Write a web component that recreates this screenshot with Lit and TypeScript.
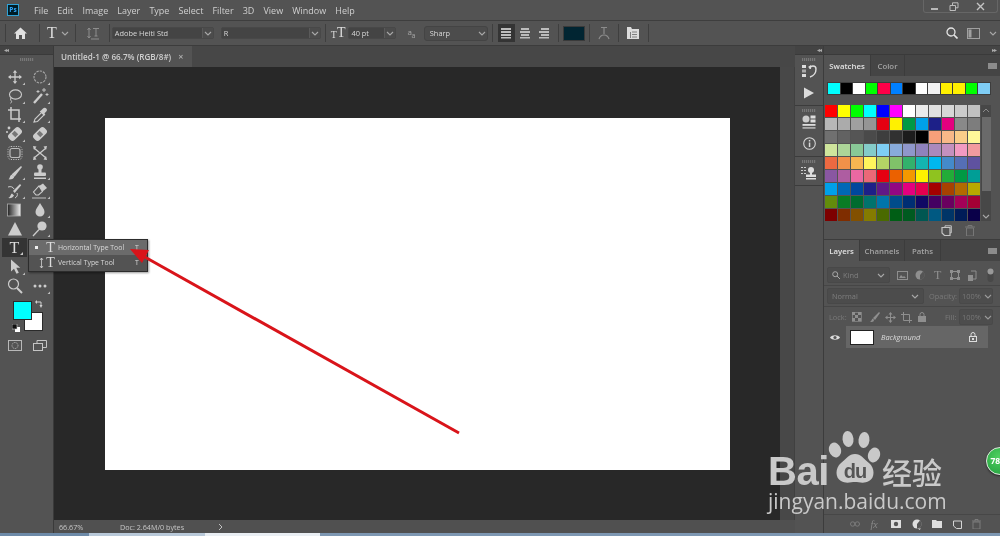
import { LitElement, html, css, svg } from "lit";
import { customElement } from "lit/decorators.js";

const MENUS = ["File", "Edit", "Image", "Layer", "Type", "Select", "Filter", "3D", "View", "Window", "Help"];

const RECENT = ["#00ffff", "#000000", "#ffffff", "#00ff00", "#ff0048", "#0080ff", "#000000", "#ffffff", "#f2f2f2", "#fff000", "#fff000", "#00ff00", "#7fcdf5"];

const SWATCHES = [
  "#ff0000", "#ffff00", "#00ff00", "#00ffff", "#0000ff", "#ff00ff", "#ffffff", "#ebebeb", "#e1e1e1", "#d7d7d7", "#cbcbcb", "#c1c1c1",
  "#b7b7b7", "#ababab", "#a0a0a0", "#959595", "#e60012", "#fff100", "#009944", "#00a0e9", "#1d2088", "#e4007f", "#898989", "#7d7d7d",
  "#707070", "#626262", "#555555", "#4a4a4a", "#3e3e3e", "#313131", "#1c1c1c", "#000000", "#f7a07a", "#f8b888", "#facd89", "#fff899",
  "#cfe59c", "#acd598", "#89c997", "#84ccc9", "#7ecef4", "#88abda", "#8f97cb", "#8f82bc", "#aa89bd", "#c490bf", "#f29ac2", "#f29b9f",
  "#ec6941", "#f19149", "#f8b551", "#fff45c", "#b3d465", "#80c269", "#32b16c", "#13b5b1", "#00b7ee", "#448aca", "#556fb5", "#5f52a0",
  "#8957a1", "#ae5da1", "#ea68a2", "#eb6877", "#e60012", "#eb6100", "#f39800", "#fff100", "#8fc31f", "#22ac38", "#009944", "#009e96",
  "#00a0e9", "#0068b7", "#00479d", "#1d2088", "#601986", "#920783", "#e4007f", "#e5004f", "#a40000", "#a84200", "#b36b00", "#b8a800",
  "#638c0b", "#097c25", "#006b2f", "#00736d", "#0075a9", "#004c8b", "#002e73", "#100964", "#440062", "#6a005f", "#a40058", "#a40035",
  "#7d0000", "#7f2d00", "#825000", "#847b00", "#4a6a00", "#005e15", "#005a20", "#005752", "#005982", "#003567", "#001c58", "#0a0049",
];

const C = "#cccccc";

// tool icons, drawn in a 24x18 box with the glyph around 12,9
const TOOL_ICONS: Record<string, unknown> = {
  move: svg`<path d="M12 3v12M6 9h12" stroke=${C} stroke-width="1.300" fill="none"/><path d="M12 2l2.200 2.800h-4.400zM12 16l2.200-2.800h-4.400zM5 9l2.800-2.200v4.400zM19 9l-2.800-2.200v4.400z" fill=${C}/>`,
  marquee: svg`<circle cx="12" cy="9" r="6" stroke="#a8a8a8" stroke-width="1.100" stroke-dasharray="2.400 1" fill="none"/>`,
  lasso: svg`<ellipse cx="12.500" cy="7.500" rx="6" ry="4.600" stroke=${C} stroke-width="1.100" fill="none"/><path d="M8 11c-1 1.500 0 2.500 .5 3.200c.3 .8-.3 1.600-1 2" stroke=${C} stroke-width="1" fill="none"/>`,
  wand: svg`<path d="M6 16L14 7" stroke=${C} stroke-width="2.400"/><path d="M16 1v4M14 3h4M19 6v3M17.500 7.500h3M10 3v3M8.500 4.500h3" stroke=${C} stroke-width=".9"/>`,
  crop: svg`<path d="M8 1v12h10M5 4h11v12" stroke=${C} stroke-width="1.500" fill="none"/>`,
  dropper: svg`<path d="M6 16l1-3 7-7 2.500 2.500-7 7z" fill="none" stroke=${C} stroke-width="1.100"/><path d="M13 4.500l2-2c1-1 2.500-1 3.300 0c.9 .9 .9 2.200 0 3l-2 2 1 1-1.300 1.300-4.300-4.300z" fill=${C}/>`,
  bandA: svg`<g transform="rotate(-45 12 9)"><rect x="4.500" y="5" width="15" height="8" rx="3" fill=${C}/><rect x="10" y="6.500" width="4" height="5" fill="#777"/></g><circle cx="6" cy="3" r="1.400" fill=${C}/><circle cx="4" cy="7" r="1" fill=${C}/>`,
  bandB: svg`<g transform="rotate(-45 12 9)"><rect x="4.500" y="5" width="15" height="8" rx="3" fill=${C}/><rect x="10" y="6.500" width="4" height="5" fill="#777"/></g>`,
  subject: svg`<rect x="7" y="4.500" width="10" height="9" rx="2" fill="none" stroke="#bbb" stroke-width="1.200"/><rect x="5" y="2.500" width="14" height="13" rx="3" fill="none" stroke="#bbb" stroke-width="1" stroke-dasharray="1.200 1.200"/>`,
  shuffle: svg`<path d="M6 4l12 10M6 14L18 4" stroke=${C} stroke-width="1.300"/><path d="M5 2l3.500 .5L6 6zM5 16l3.500-.5L6 12zM19 2l-3.500 .5L18 6zM19 16l-3.500-.5L18 12z" fill=${C}/>`,
  brush: svg`<path d="M8.500 11.500L18 3l1 1-7.500 9.800z" fill=${C}/><path d="M8 12c2-.5 3.500 1 3 2.500c-.7 1.600-3.500 2.200-5.500 1.800c1.300-1 1.300-3 2.500-4.300z" fill=${C}/>`,
  stamp: svg`<circle cx="12" cy="4" r="2.800" fill=${C}/><rect x="10.500" y="5" width="3" height="5" fill=${C}/><rect x="6" y="9.500" width="12" height="3.500" rx="1" fill=${C}/><rect x="6" y="14.500" width="12" height="1.500" fill=${C}/>`,
  history: svg`<path d="M10 9l7-7 1.200 1.200-6.500 7.800z" fill=${C}/><path d="M5 16c2.500-.5 2-3 4-4.500l2 2c-1 2-3 3-6 2.500z" fill=${C}/><path d="M5 5c3-1 5 0 6 2M14 11c1 2 0 4-2 5" stroke=${C} stroke-width="1" fill="none"/>`,
  eraser: svg`<path d="M11 4l4-2.500 4 4.500-4.500 3.500z" fill=${C}/><path d="M11 4l3.500 5.500-4 3.500H8l-2.500-3z" fill="none" stroke=${C} stroke-width="1.100"/><path d="M4 16h14" stroke=${C} stroke-width=".9"/>`,
  gradient: svg`<defs><linearGradient id="gr"><stop offset="0" stop-color="#222"/><stop offset="1" stop-color="#eee"/></linearGradient></defs><rect x="4.500" y="3" width="13" height="12" fill="url(#gr)" stroke="#aaa" stroke-width=".8"/>`,
  drop: svg`<path d="M12 2c2 3.500 4.500 6 4.500 9a4.500 4.500 0 0 1-9 0c0-3 2.500-5.500 4.500-9z" fill=${C}/>`,
  triangle: svg`<path d="M12 2l7 13.500H5z" fill=${C}/>`,
  dodge: svg`<circle cx="14" cy="6" r="4.600" fill=${C}/><path d="M11 9.500L5 16" stroke=${C} stroke-width="1.300"/>`,
  arrow: svg`<path d="M8 1.500v12l3-2.800 2.500 5 2.300-1-2.500-5h4z" fill=${C}/>`,
  blank: svg``,
  zoom: svg`<circle cx="10.500" cy="7" r="5" fill="none" stroke=${C} stroke-width="1.200"/><path d="M14 11l5 5" stroke=${C} stroke-width="1.900"/>`,
  dots: svg`<circle cx="7" cy="9" r="1.500" fill=${C}/><circle cx="12" cy="9" r="1.500" fill=${C}/><circle cx="17" cy="9" r="1.500" fill=${C}/>`,
};

const TOOLS = [
  ["move", 1], ["marquee", 1], ["lasso", 1], ["wand", 1], ["crop", 1], ["dropper", 1],
  ["bandA", 1], ["bandB", 0], ["subject", 0], ["shuffle", 0], ["brush", 1], ["stamp", 1],
  ["history", 1], ["eraser", 1], ["gradient", 0], ["drop", 1], ["triangle", 0], ["dodge", 1],
  ["type", 1], ["blank", 0], ["arrow", 1], ["blank", 0], ["zoom", 0], ["dots", 1],
] as [string, number][];

const toolIcon = (name: string, corner: number) => {
  if (name === "type") {
    return html`<span class="glyph-t big">T</span><svg class="corner-only" width="24" height="18" viewBox="0 0 24 18"><path d="M21 14v3h-3z" fill="#c8c8c8"/></svg>`;
  }
  return html`<svg width="24" height="18" viewBox="0 0 24 18">${TOOL_ICONS[name]}${corner ? svg`<path d="M22 14.500v2.500h-2.500z" fill="#bdbdbd"/>` : ""}</svg>`;
};

const chevron = html`<svg width="8" height="5" viewBox="0 0 8 5"><path d="M1 1l3 3 3-3" stroke="#a8a8a8" fill="none" stroke-width="1.100"/></svg>`;

@customElement("app-root")
export class AppRoot extends LitElement {
  static styles = css`
    :host {
      display: block;
      width: 1000px;
      height: 536px;
      overflow: hidden;
      font-family: "Open Sans", "Liberation Sans", sans-serif;
      color: #d6d6d6;
    }
    .app {
      position: relative;
      width: 1000px;
      height: 536px;
      overflow: hidden;
      display: flex;
      flex-direction: column;
      background: #535353;
      filter: blur(0.35px);
    }
    svg { display: block; flex: none; }

    /* menu bar */
    .menubar {
      height: 20px;
      display: flex;
      align-items: center;
      padding-left: 7px;
      font-size: 9px;
      flex: none;
    }
    .ps-logo {
      width: 10px;
      height: 10px;
      background: #001d26;
      border: 1px solid #2fa3d8;
      color: #31a8ff;
      font-size: 6.500px;
      font-weight: 700;
      line-height: 10px;
      text-align: center;
      margin-right: 15px;
      box-sizing: content-box;
    }
    .menu-item { margin-right: 9.100px; color: #cfcfcf; }
    .winctl {
      margin-left: auto;
      margin-right: 2px;
      margin-top: -7px;
      width: 75px;
      height: 13px;
      box-sizing: border-box;
      border: 1px solid #666;
      border-top: 0;
      border-radius: 0 0 3px 3px;
      display: grid;
      grid-template-columns: 20px 20px 1fr;
      align-items: center;
      justify-items: center;
    }

    /* options bar */
    .options {
      height: 26px;
      box-sizing: border-box;
      flex: none;
      display: flex;
      align-items: center;
      border-top: 1px solid #3e3e3e;
      border-bottom: 1px solid #3c3c3c;
      font-size: 7.400px;
    }
    .sep { width: 1px; height: 18px; background: #3f3f3f; flex: none; }
    .opt-box {
      display: flex;
      align-items: center;
      height: 12px;
      box-sizing: border-box;
      background: #444;
      border-radius: 2px;
      border: 1px solid #484848;
      color: #d8d8d8;
      padding-left: 2px;
      flex: none;
    }
    .opt-box .txt { flex: 1; white-space: nowrap; }
    .opt-box .arrow {
      width: 10px;
      height: 100%;
      display: flex;
      align-items: center;
      justify-content: center;
      border-left: 1px solid #5a5a5a;
      background: #4c4c4c;
    }
    .sharp {
      background: #4c4c4c;
      height: 15px;
      border-radius: 3px;
      border-color: #444;
      padding-left: 5px;
    }
    .sharp .arrow { border: 0; background: none; }
    .align-btn {
      width: 17px;
      height: 18px;
      display: flex;
      align-items: center;
      justify-content: center;
      flex: none;
    }
    .align-btn.on { background: #343434; }
    .text-color {
      width: 20px;
      height: 13px;
      background: #012532;
      border: 1px solid #3a3a3a;
      flex: none;
    }
    .glyph-t {
      font-family: "Liberation Serif", serif;
      color: #dcdcdc;
      line-height: 1;
      flex: none;
    }
    .big { font-size: 16px; font-weight: 400; }
    .opt-right {
      margin-left: auto;
      display: flex;
      align-items: center;
      gap: 9px;
      padding-right: 3px;
    }

    /* main area */
    .main { flex: 1; min-height: 0; display: flex; }
    .toolbar {
      width: 54px;
      box-sizing: border-box;
      flex: none;
      border-right: 1px solid #3a3a3a;
      display: flex;
      flex-direction: column;
      background: #535353;
    }
    .collapse {
      height: 8px;
      flex: none;
      background: #434343;
      font-size: 6px;
      line-height: 8px;
      color: #aaa;
      padding: 0 4px;
      display: flex;
      letter-spacing: -1px;
      border-bottom: 1px solid #3a3a3a;
    }
    .collapse.end { justify-content: flex-end; }
    .grip {
      width: 14px;
      height: 3px;
      margin: 3px auto 0;
      background: repeating-linear-gradient(90deg, #777 0 1px, #5a5a5a 1px 2px);
      flex: none;
    }
    .tools {
      display: grid;
      grid-template-columns: 25px 25px;
      grid-auto-rows: 19px;
      padding: 6px 0 0 2px;
    }
    .tool {
      display: flex;
      align-items: center;
      justify-content: center;
      position: relative;
    }
    .tool.on { background: #343434; }
    .corner-only { position: absolute; left: 0; top: 0; }
    .colors {
      position: relative;
      height: 30px;
      margin: 6px 0 0 13px;
    }
    .fg, .bg {
      position: absolute;
      width: 17px;
      height: 17px;
      border: 1px solid #2a2a2a;
    }
    .fg { left: 0; top: 0; background: #00ffff; z-index: 1; }
    .bg { left: 11px; top: 11px; background: #fff; }
    .mini-swap { position: absolute; left: 22px; top: -1px; }
    .mini-def { position: absolute; left: -1px; top: 23px; }
    .mode-row {
      display: grid;
      grid-template-columns: 25px 25px;
      margin: 9px 0 0 2px;
      justify-items: center;
    }

    /* document */
    .doc { flex: 1; min-width: 0; display: flex; flex-direction: column; background: #4a4a4a; }
    .tabstrip { height: 21px; background: #474747; display: flex; flex: none; }
    .tab {
      width: 138px;
      background: #535353;
      display: flex;
      align-items: center;
      padding-left: 7px;
      box-sizing: border-box;
      font-size: 8.100px;
      font-weight: 600;
      color: #cfcfcf;
      gap: 7px;
    }
    .tab span:last-child { color: #b5b5b5; font-size: 9px; }
    .doc-mid { flex: 1; min-height: 0; display: flex; }
    .pasteboard {
      flex: 1;
      background: #282828;
      display: flex;
      align-items: center;
      justify-content: center;
    }
    .canvas { width: 625px; height: 352px; background: #fff; flex: none; }
    .doc-scroll { width: 14px; flex: none; background: #484848; border-right: 1px solid #404040; }
    .status {
      height: 13px;
      flex: none;
      display: flex;
      align-items: center;
      font-size: 7.200px;
      color: #c6c6c6;
      background: #505050;
    }
    .status .zoomv { width: 66px; padding-left: 5px; box-sizing: border-box; }
    .status .info { width: 98px; }

    /* panel dock */
    .strip {
      width: 29px;
      flex: none;
      display: flex;
      flex-direction: column;
      background: #535353;
      border-right: 1px solid #3c3c3c;
      box-sizing: border-box;
    }
    .strip-group {
      display: flex;
      flex-direction: column;
      align-items: center;
      border-bottom: 1px solid #3c3c3c;
      gap: 3px;
      box-sizing: border-box;
      flex: none;
    }
    .dock { width: 176px; flex: none; display: flex; flex-direction: column; background: #3c3c3c; }
    .panel { background: #535353; display: flex; flex-direction: column; }
    .tabs {
      height: 21px;
      display: flex;
      align-items: stretch;
      background: #454545;
      font-size: 7.800px;
      flex: none;
      color: #a4a4a4;
      font-weight: 600;
    }
    .ptab { display: flex; align-items: center; justify-content: center; border-right: 1px solid #3c3c3c; }
    .ptab.on { background: #535353; color: #e2e2e2; }
    .menu-ico { margin: auto 3px auto auto; width: 9px; height: 6px; box-sizing: border-box; background: #8c8c8c; }

    .swatch-panel { height: 184px; flex: none; }
    .recent {
      display: grid;
      grid-template-columns: repeat(13, 11.500px);
      column-gap: 1px;
      margin: 6px 9px 0 3px;
      padding: 1px 1px;
      background: #3d3d3d;
      height: 13px;
      box-sizing: border-box;
      flex: none;
    }
    .recent i { display: block; }
    .swatch-body { display: flex; margin: 10px 0 0 1px; flex: none; }
    .swatches {
      display: grid;
      grid-template-columns: repeat(12, 12px);
      grid-auto-rows: 12px;
      gap: 1px;
    }
    .swatches i { display: block; }
    .vscroll {
      width: 10px;
      margin-left: 1px;
      background: #474747;
      display: flex;
      flex-direction: column;
      align-items: center;
      height: 116px;
    }
    .vscroll .thumb { width: 9px; height: 74px; background: #6a6a6a; margin-top: 2px; }
    .vscroll .ends { height: 10px; display: flex; align-items: center; }
    .panel-foot {
      display: flex;
      justify-content: flex-end;
      align-items: center;
      gap: 13px;
      padding-right: 25px;
      flex: 1;
    }

    .layers-panel { flex: 1; margin-top: 1px; min-height: 0; position: relative; }
    .lrow { display: flex; align-items: center; font-size: 7.400px; color: #797979; flex: none; }
    .filter-row { height: 16px; margin: 6px 0 0 3px; gap: 0; }
    .lbox {
      display: flex;
      align-items: center;
      justify-content: space-between;
      background: #4c4c4c;
      border: 1px solid #484848;
      box-sizing: border-box;
      border-radius: 2px;
      height: 100%;
      padding: 0 4px;
      color: #7f7f7f;
      flex: none;
    }
    .lico { display: flex; gap: 0; align-items: center; margin-left: 4px; }
    .lico > * { width: 17.500px; display: flex; justify-content: center; }
    .lrule { height: 1px; background: #464646; flex: none; margin-top: 2px; }
    .blend-row { height: 16px; margin: 2px 0 0 3px; }
    .lock-row { height: 16px; margin: 2px 0 0 5px; }
    .layer-row {
      height: 22px;
      display: flex;
      align-items: center;
      margin-top: 1px;
      flex: none;
    }
    .eye { width: 22px; display: flex; justify-content: center; flex: none; }
    .layer {
      width: 142px;
      height: 100%;
      background: #666;
      display: flex;
      align-items: center;
      padding-left: 4px;
      box-sizing: border-box;
      font-size: 7.400px;
      font-style: italic;
      color: #dcdcdc;
    }
    .thumb-w { width: 22px; height: 13px; background: #fff; border: 1px solid #222; margin-right: 7px; flex: none; }
    .layer svg { margin-left: auto; margin-right: 11px; }
    .layers-foot {
      margin-top: auto;
      height: 18px;
      border-top: 1px solid #474747;
      display: flex;
      align-items: center;
      justify-content: flex-end;
      padding-right: 19px;
      gap: 10.500px;
      flex: none;
    }

    .taskbar {
      height: 3px;
      flex: none;
      background: linear-gradient(90deg, #6d8aa8 0 89px, #b9c9d9 89px 205px, #e9eef3 205px 320px, #7d97b2 320px);
    }

    /* popup flyout */
    .flyout {
      position: absolute;
      left: 28px;
      top: 239px;
      width: 120px;
      height: 33px;
      box-sizing: border-box;
      background: #535353;
      border: 1px solid #2c2c2c;
      box-shadow: 1px 1px 2px rgba(0, 0, 0, 0.4);
      font-size: 6.900px;
      color: #d8d8d8;
      display: flex;
      flex-direction: column;
    }
    .fly-item {
      height: 15px;
      display: grid;
      grid-template-columns: 15px 13px 1fr 12px;
      align-items: center;
    }
    .fly-item.on { background: #6b6b6b; }
    .fly-item b { width: 3px; height: 3px; background: #eee; justify-self: center; }
    .fly-item .glyph-t { font-size: 14px; justify-self: center; }
    .fly-item .name { white-space: nowrap; }
    .fly-v { display: flex; align-items: center; justify-content: flex-end; }

    .arrow-ov { position: absolute; left: 0; top: 0; pointer-events: none; }

    /* watermark */
    .mark {
      position: absolute;
      left: 768px;
      top: 428px;
      width: 182px;
      height: 88px;
      color: #c9c9c9;
      pointer-events: none;
      font-family: "Liberation Sans", sans-serif;
    }
    .mark-top { display: flex; align-items: flex-end; height: 60px; }
    .bai { font-size: 40px; font-weight: 700; line-height: 40px; letter-spacing: -.4px; margin-bottom: -3px; width: 59px; flex: none; }
    .paw { margin: 0; }
    .cn {
      font-family: "Noto Sans CJK SC", sans-serif;
      font-size: 30px;
      font-weight: 500;
      line-height: 30px;
      margin: 0 0 2px 1px;
      white-space: nowrap;
    }
    .url {
      font-family: "Open Sans", sans-serif;
      font-size: 21px;
      line-height: 24px;
      margin-top: 1px;
      white-space: nowrap;
    }
    .badge {
      position: absolute;
      left: 986px;
      top: 447px;
      width: 28px;
      height: 28px;
      box-sizing: border-box;
      border-radius: 50%;
      border: 1.500px solid #dfe9df;
      background: radial-gradient(circle at 45% 35%, #4fd060, #1f9c3c);
      color: #fff;
      font-size: 8.500px;
      font-weight: 700;
      line-height: 25px;
      padding-left: 3.500px;
      box-shadow: 0 1px 2px rgba(0, 0, 0, 0.5);
    }
  `;

  private windowControls() {
    return html`<div class="winctl">
      <svg width="9" height="9" viewBox="0 0 9 9"><rect x="1" y="6" width="7" height="2" fill="#b8b8b8"/></svg>
      <svg width="10" height="9" viewBox="0 0 10 9"><path d="M1 3.500h5.500v5H1zM3.500 3V.8H9v5H7" fill="none" stroke="#bcbcbc"/></svg>
      <svg width="9" height="9" viewBox="0 0 9 9"><path d="M1 1l7 7M8 1L1 8" stroke="#c4c4c4" stroke-width="1.400"/></svg>
    </div>`;
  }

  private optionsBar() {
    const alignIcon = (w: number[], on = false) => html`<div class="align-btn ${on ? "on" : ""}">
      <svg width="12" height="12" viewBox="0 0 12 12">
        <rect x=${w[0]} y="1" width=${w[1]} height="2" fill="#bcbcbc"/><rect x="1" y="4" width="10" height="2" fill="#bcbcbc"/>
        <rect x=${w[0]} y="7" width=${w[1]} height="2" fill="#bcbcbc"/><rect x="1" y="10" width="10" height="1.500" fill="#bcbcbc"/>
      </svg>
    </div>`;
    return html`<div class="options">
      <div class="sep" style="margin-left:5px"></div>
      <svg style="margin-left:8px" width="13" height="12" viewBox="0 0 13 12"><path d="M6.500 .5L13 6.500h-2V12H8V8H5v4H2V6.500H0z" fill="#e0e0e0"/></svg>
      <div class="sep" style="margin-left:12px"></div>
      <span class="glyph-t big" style="margin-left:7px">T</span>
      <span style="margin-left:4px">${chevron}</span>
      <div class="sep" style="margin-left:6px"></div>
      <svg style="margin-left:10px" width="14" height="13" viewBox="0 0 14 13"><path d="M7 1.500h6M10 1.500V9M8.500 9h3M3 1v10M1.500 3L3 1l1.500 2M1.500 9L3 11l1.500-2M5 12h8" stroke="#8e8e8e" fill="none"/></svg>
      <div class="sep" style="margin-left:9px"></div>
      <div class="opt-box" style="margin-left:2px;width:102px"><span class="txt">Adobe Heiti Std</span><span class="arrow">${chevron}</span></div>
      <div class="opt-box" style="margin-left:7px;width:100px"><span class="txt">R</span><span class="arrow">${chevron}</span></div>
      <div class="sep" style="margin-left:4px"></div>
      <span class="glyph-t" style="margin-left:5px;font-size:10px;align-self:center;padding-top:3px">T</span><span class="glyph-t" style="font-size:14px">T</span>
      <div class="opt-box" style="margin-left:3px;width:48px"><span class="txt">40 pt</span><span class="arrow">${chevron}</span></div>
      <span style="margin-left:11px;font-size:8px;color:#a8a8a8;letter-spacing:-.5px;flex:none">a<sub style="font-size:7px">a</sub></span>
      <div class="opt-box sharp" style="margin-left:9px;width:64px"><span class="txt">Sharp</span><span class="arrow">${chevron}</span></div>
      <div class="sep" style="margin-left:4px"></div>
      <div style="margin-left:5px;display:flex;gap:2px">${alignIcon([1, 10], true)}${alignIcon([2, 8])}${alignIcon([3, 8])}</div>
      <div class="sep" style="margin-left:5px"></div>
      <div class="text-color" style="margin-left:4px"></div>
      <div class="sep" style="margin-left:4px"></div>
      <svg style="margin-left:8px" width="12" height="14" viewBox="0 0 12 14"><path d="M3 1.500h6M6 1.500V8M1 13c1-3 3-4 5-4s4 1 5 4" stroke="#8c8c8c" fill="none" stroke-width="1.200"/></svg>
      <div class="sep" style="margin-left:8px"></div>
      <svg style="margin-left:8px" width="12" height="12" viewBox="0 0 12 12"><path d="M0 0h4l1 2h7v10H0z" fill="#dcdcdc"/><path d="M5 5h5M5 7.500h5M5 10h5M3.500 5v6" stroke="#666" stroke-width=".8"/></svg>
      <div class="sep" style="margin-left:9px"></div>
      <div class="opt-right">
        <svg width="12" height="12" viewBox="0 0 12 12"><circle cx="5" cy="5" r="4" fill="none" stroke="#e4e4e4" stroke-width="1.300"/><path d="M8 8l3.500 3.500" stroke="#e4e4e4" stroke-width="1.700"/></svg>
        <svg width="13" height="11" viewBox="0 0 13 11"><rect x=".5" y=".5" width="12" height="10" fill="none" stroke="#a0a0a0"/><rect x="1.500" y="1.500" width="3" height="8" fill="#a0a0a0"/></svg>
        <span>${chevron}</span>
      </div>
    </div>`;
  }

  private toolbar() {
    return html`<div class="toolbar">
      <div class="collapse">◂◂</div>
      <div class="grip"></div>
      <div class="tools">
        ${TOOLS.map(([n, c]) => html`<div class="tool ${n === "type" ? "on" : ""}">${toolIcon(n, c)}</div>`)}
      </div>
      <div class="colors">
        <div class="fg"></div>
        <div class="bg"></div>
        <svg class="mini-swap" width="8" height="8" viewBox="0 0 8 8"><path d="M1 2h5v4" stroke="#d0d0d0" fill="none"/><path d="M0 2l2-2v4zM4.500 5h3L6 8z" fill="#d0d0d0"/></svg>
        <svg class="mini-def" width="8" height="8" viewBox="0 0 8 8"><rect x="3" y="3" width="5" height="5" fill="#fff"/><rect x="0" y="0" width="5" height="5" fill="#111" stroke="#ccc" stroke-width=".6"/></svg>
      </div>
      <div class="mode-row">
        <svg width="14" height="11" viewBox="0 0 14 11"><rect x=".5" y=".5" width="13" height="10" fill="none" stroke="#b8b8b8"/><circle cx="7" cy="5.500" r="3" fill="none" stroke="#b8b8b8" stroke-dasharray="1 .8"/></svg>
        <svg width="14" height="11" viewBox="0 0 14 11"><rect x=".5" y="3.500" width="9" height="7" fill="#535353" stroke="#c4c4c4"/><path d="M4 3V.5h9.500v7H10" fill="none" stroke="#c4c4c4"/></svg>
      </div>
    </div>`;
  }

  private docArea() {
    return html`<div class="doc">
      <div class="tabstrip">
        <div class="tab"><span>Untitled-1 @ 66.7% (RGB/8#)</span><span>×</span></div>
      </div>
      <div class="doc-mid">
        <div class="pasteboard"><div class="canvas"></div></div>
        <div class="doc-scroll"></div>
      </div>
      <div class="status">
        <span class="zoomv">66.67%</span>
        <span class="info">Doc: 2.64M/0 bytes</span>
        <svg width="5" height="8" viewBox="0 0 5 8"><path d="M1 1l3 3-3 3" stroke="#c0c0c0" fill="none"/></svg>
      </div>
    </div>`;
  }

  private strip() {
    return html`<div class="strip">
      <div class="collapse end" style="padding-right:2px">◂◂</div>
      <div class="strip-group" style="height:51px">
        <div class="grip"></div>
        <svg width="16" height="14" viewBox="0 0 16 14"><rect x="1" y="1" width="4" height="3" fill="#ddd"/><rect x="1" y="5.500" width="4" height="3" fill="#aaa"/><rect x="1" y="10" width="4" height="3" fill="#ddd"/><path d="M9 5c0-4 6-4 6 0s-3 7-6 8" stroke="#ddd" fill="none" stroke-width="1.400"/><path d="M7 3l3-2v4z" fill="#ddd"/></svg>
        <svg style="margin-top:6px" width="12" height="12" viewBox="0 0 12 12"><path d="M1 .5L11 6 1 11.500z" fill="#dcdcdc"/></svg>
      </div>
      <div class="strip-group" style="height:51px">
        <div class="grip"></div>
        <svg width="14" height="14" viewBox="0 0 14 14"><circle cx="4" cy="4" r="3.500" fill="#ccc"/><rect x="8.500" y=".5" width="5" height="3" fill="#ddd"/><rect x="8.500" y="4.500" width="5" height="3" fill="#ddd"/><rect x=".5" y="9" width="13" height="1.800" fill="#ddd"/><rect x=".5" y="12" width="13" height="1.800" fill="#aaa"/></svg>
        <svg style="margin-top:5px" width="13" height="13" viewBox="0 0 13 13"><circle cx="6.500" cy="6.500" r="5.800" fill="none" stroke="#d8d8d8" stroke-width="1.100"/><rect x="5.800" y="5.500" width="1.500" height="4.500" fill="#d8d8d8"/><rect x="5.800" y="3" width="1.500" height="1.500" fill="#d8d8d8"/></svg>
      </div>
      <div class="strip-group" style="height:29px">
        <div class="grip"></div>
        <svg width="16" height="14" viewBox="0 0 16 14"><path d="M0 1.500h2M3 1.500h2M0 4.500h2M3 4.500h2M0 7.500h2M3 7.500h2" stroke="#ccc"/><circle cx="10" cy="4" r="3" fill="#ddd"/><rect x="9" y="5" width="2" height="4" fill="#ddd"/><rect x="5" y="8.500" width="10" height="2.500" fill="#ddd"/><rect x="5" y="12" width="10" height="1.500" fill="#ddd"/></svg>
      </div>
    </div>`;
  }

  private swatchPanel() {
    return html`<div class="panel swatch-panel">
      <div class="tabs">
        <div class="ptab on" style="width:46px">Swatches</div>
        <div class="ptab" style="width:33px">Color</div>
        <div class="menu-ico"></div>
      </div>
      <div class="recent">${RECENT.map((c) => html`<i style="background:${c}"></i>`)}</div>
      <div class="swatch-body">
        <div class="swatches">${SWATCHES.map((c) => html`<i style="background:${c}"></i>`)}</div>
        <div class="vscroll">
          <span class="ends"><svg width="8" height="5" viewBox="0 0 8 5"><path d="M1 4l3-3 3 3" stroke="#8a8a8a" fill="none"/></svg></span>
          <div class="thumb"></div>
          <span class="ends" style="margin-top:auto">${chevron}</span>
        </div>
      </div>
      <div class="panel-foot">
        <svg width="11" height="11" viewBox="0 0 11 11"><path d="M1 2.500h8v8H3.500L1 8z" fill="none" stroke="#c4c4c4" stroke-width="1.200"/><path d="M4 2.500V.8h6.300v7H9" fill="none" stroke="#c4c4c4"/></svg>
        <svg width="10" height="11" viewBox="0 0 10 11"><path d="M0 2h10M3 2V.5h4V2M1.500 3h7v8h-7z" stroke="#777" fill="none"/></svg>
      </div>
    </div>`;
  }

  private layersPanel() {
    const D = "#8f8f8f";
    const field = html`<div class="lbox" style="width:34px;height:16px;margin-left:4px;padding:0 0 0 2px;opacity:.85"><span>100%</span><span>${chevron}</span></div>`;
    return html`<div class="panel layers-panel">
      <div class="tabs">
        <div class="ptab on" style="width:35px">Layers</div>
        <div class="ptab" style="width:44px">Channels</div>
        <div class="ptab" style="width:35px">Paths</div>
        <div class="menu-ico"></div>
      </div>
      <div class="lrow filter-row">
        <div class="lbox" style="width:63px">
          <span style="display:flex;align-items:center;gap:3px"><svg width="8" height="8" viewBox="0 0 8 8"><circle cx="3.200" cy="3.200" r="2.500" fill="none" stroke="#a8a8a8"/><path d="M5 5l3 3" stroke="#a8a8a8"/></svg>Kind</span>
          ${chevron}
        </div>
        <div class="lico" style="margin-left:4px">
          <span><svg width="11" height="9" viewBox="0 0 11 9"><rect x=".5" y=".5" width="10" height="8" fill="none" stroke=${D}/><path d="M2 7l2-3 2 2 1-1 2 2z" fill=${D}/></svg></span>
          <span><svg width="10" height="10" viewBox="0 0 10 10"><circle cx="5" cy="5" r="4.500" fill=${D}/><path d="M5 5l3-3.500A4.500 4.500 0 0 1 5 9.500z" fill="#555"/></svg></span>
          <span><span class="glyph-t" style="font-size:12px;color:${D}">T</span></span>
          <span><svg width="10" height="10" viewBox="0 0 10 10"><rect x="1.500" y="1.500" width="7" height="7" fill="none" stroke=${D}/><path d="M0 0h3v3H0zM7 0h3v3H7zM0 7h3v3H0zM7 7h3v3H7z" fill=${D}/></svg></span>
          <span><svg width="9" height="11" viewBox="0 0 9 11"><path d="M3 1h5v8H5" fill="none" stroke=${D}/><rect x="0" y="5" width="5" height="6" fill=${D}/></svg></span>
          <span><svg width="7" height="15" viewBox="0 0 7 15"><rect x=".5" y="2" width="6" height="12" rx="3" fill="#484848"/><circle cx="3.500" cy="3.500" r="3" fill="#999"/></svg></span>
        </div>
      </div>
      <div class="lrule"></div>
      <div class="lrow blend-row">
        <div class="lbox" style="width:97px"><span>Normal</span>${chevron}</div>
        <span style="margin-left:5px;width:26px;white-space:nowrap">Opacity:</span>
        ${field}
      </div>
      <div class="lrule"></div>
      <div class="lrow lock-row">
        <span style="width:23px">Lock:</span>
        <svg width="10" height="10" viewBox="0 0 10 10"><path d="M0 0h3v3H0zM6 0h3v3H6zM3 3h3v3H3zM0 6h3v3H0zM6 6h3v3H6z" fill=${D}/><rect x=".5" y=".5" width="9" height="9" fill="none" stroke=${D} stroke-width=".7"/></svg>
        <svg style="margin-left:8px" width="10" height="10" viewBox="0 0 10 10"><path d="M3 6l6-6 1 1-5 7zM0 10c2 0 4 0 4-2L3 6.500C1.500 7 2 9 0 10z" fill=${D}/></svg>
        <svg style="margin-left:5px" width="11" height="11" viewBox="0 0 11 11"><path d="M5.500 0l2 2.500h-4zM5.500 11l2-2.500h-4zM0 5.500L2.500 3.500v4zM11 5.500L8.500 3.500v4z" fill=${D}/><path d="M5.500 2v7M2 5.500h7" stroke=${D}/></svg>
        <svg style="margin-left:5px" width="11" height="11" viewBox="0 0 11 11"><path d="M2.500 0v8.500H11M0 2.500h8.500V11" fill="none" stroke=${D}/></svg>
        <svg style="margin-left:6px" width="8" height="10" viewBox="0 0 8 10"><path d="M2 4V2.500a2 2 0 0 1 4 0V4" fill="none" stroke=${D}/><rect y="4" width="8" height="6" fill=${D}/></svg>
        <span style="margin-left:19px;width:10px">Fill:</span>
        ${field}
      </div>
      <div class="layer-row">
        <div class="eye"><svg width="10" height="7" viewBox="0 0 10 7"><path d="M0 3.500C2 .5 8 .5 10 3.500C8 6.500 2 6.500 0 3.500z" fill="#ddd"/><circle cx="5" cy="3.500" r="1.600" fill="#535353"/></svg></div>
        <div class="layer">
          <div class="thumb-w"></div>
          <span>Background</span>
          <svg width="8" height="10" viewBox="0 0 8 10"><path d="M2 4V2.500a2 2 0 0 1 4 0V4" fill="none" stroke="#ddd"/><rect x=".5" y="4.500" width="7" height="5" fill="none" stroke="#ddd"/><rect x="3" y="6" width="2" height="2" fill="#ddd"/></svg>
        </div>
      </div>
      <div class="layers-foot">
        <svg width="10" height="6" viewBox="0 0 10 6"><circle cx="2.700" cy="3" r="2.200" fill="none" stroke="#7c7c7c"/><circle cx="7.300" cy="3" r="2.200" fill="none" stroke="#7c7c7c"/></svg>
        <span style="font-style:italic;font-family:'Liberation Serif',serif;font-size:10px;color:#8a8a8a;width:10px">fx</span>
        <svg width="10" height="8" viewBox="0 0 10 8"><rect width="10" height="8" fill="#dedede"/><circle cx="5" cy="4" r="2.200" fill="#555"/></svg>
        <svg width="10" height="11" viewBox="0 0 10 11"><circle cx="5" cy="5" r="4.500" fill="#dedede"/><path d="M5 5l3-3.500A4.500 4.500 0 0 1 5 9.500z" fill="#555"/><path d="M6 9.500h3L7.500 11z" fill="#ddd"/></svg>
        <svg width="10" height="8" viewBox="0 0 10 8"><path d="M0 0h4l1 1h5v7H0z" fill="#dedede"/></svg>
        <svg width="9" height="9" viewBox="0 0 9 9"><path d="M.5 1h8v7.500h-5L.5 6z" fill="none" stroke="#d4d4d4"/></svg>
        <svg width="9" height="10" viewBox="0 0 9 10"><path d="M0 2h9M3 2V.5h3V2M1 3h7v7H1z" stroke="#7c7c7c" fill="none"/></svg>
      </div>
    </div>`;
  }

  private flyout() {
    return html`<div class="flyout">
      <div class="fly-item on"><b></b><span class="glyph-t">T</span><span class="name" style="padding-left:1px">Horizontal Type Tool</span><span>T</span></div>
      <div class="fly-item">
        <span class="fly-v"><svg width="5" height="12" viewBox="0 0 5 12"><path d="M2.500 1v10M1 3l1.500-2L4 3M1 9l1.500 2L4 9" stroke="#d0d0d0" fill="none" stroke-width=".8"/></svg></span>
        <span class="glyph-t">T</span><span class="name" style="padding-left:1px">Vertical Type Tool</span><span>T</span>
      </div>
    </div>`;
  }

  private watermark() {
    return html`<div class="mark">
      <div class="mark-top">
        <span class="bai">Bai</span>
        <svg class="paw" width="54" height="58" viewBox="0 0 54 58">
          <ellipse cx="8" cy="20" rx="6" ry="7.500" fill="#c9c9c9" transform="rotate(-18 8 20)"/>
          <ellipse cx="21" cy="9" rx="5.500" ry="8" fill="#c9c9c9" transform="rotate(-6 21 9)"/>
          <ellipse cx="37" cy="10" rx="5.500" ry="8" fill="#c9c9c9" transform="rotate(6 37 10)"/>
          <ellipse cx="47" cy="25" rx="6" ry="7.500" fill="#c9c9c9" transform="rotate(18 47 25)"/>
          <path d="M28 24c6 0 9 5 14 9c6 5 6 15 0 18c-5 3-10 1-14 1s-9 2-14-1c-6-3-6-13 0-18c5-4 8-9 14-9z" fill="#c9c9c9"/>
          <text x="28" y="48" text-anchor="middle" font-family="Liberation Sans, sans-serif" font-size="20" font-weight="700" fill="#555" letter-spacing="-1">du</text>
        </svg>
        <span class="cn">经验</span>
      </div>
      <div class="url">jingyan.baidu.com</div>
    </div>`;
  }

  render() {
    return html`<div class="app">
      <div class="menubar">
        <div class="ps-logo">Ps</div>
        ${MENUS.map((m) => html`<span class="menu-item">${m}</span>`)}
        ${this.windowControls()}
      </div>
      ${this.optionsBar()}
      <div class="main">
        ${this.toolbar()}
        ${this.docArea()}
        ${this.strip()}
        <div class="dock">
          <div class="collapse end" style="background:#454545">▸▸</div>
          ${this.swatchPanel()}
          ${this.layersPanel()}
        </div>
      </div>
      <div class="taskbar"></div>
      ${this.flyout()}
      <svg class="arrow-ov" width="1000" height="536" viewBox="0 0 1000 536">
        <path d="M459 433L143 256" stroke="#d9141a" stroke-width="3" fill="none"/>
        <path d="M130 249L149 250L142 263z" fill="#d9141a"/>
      </svg>
      ${this.watermark()}
      <div class="badge">78</div>
    </div>`;
  }
}
